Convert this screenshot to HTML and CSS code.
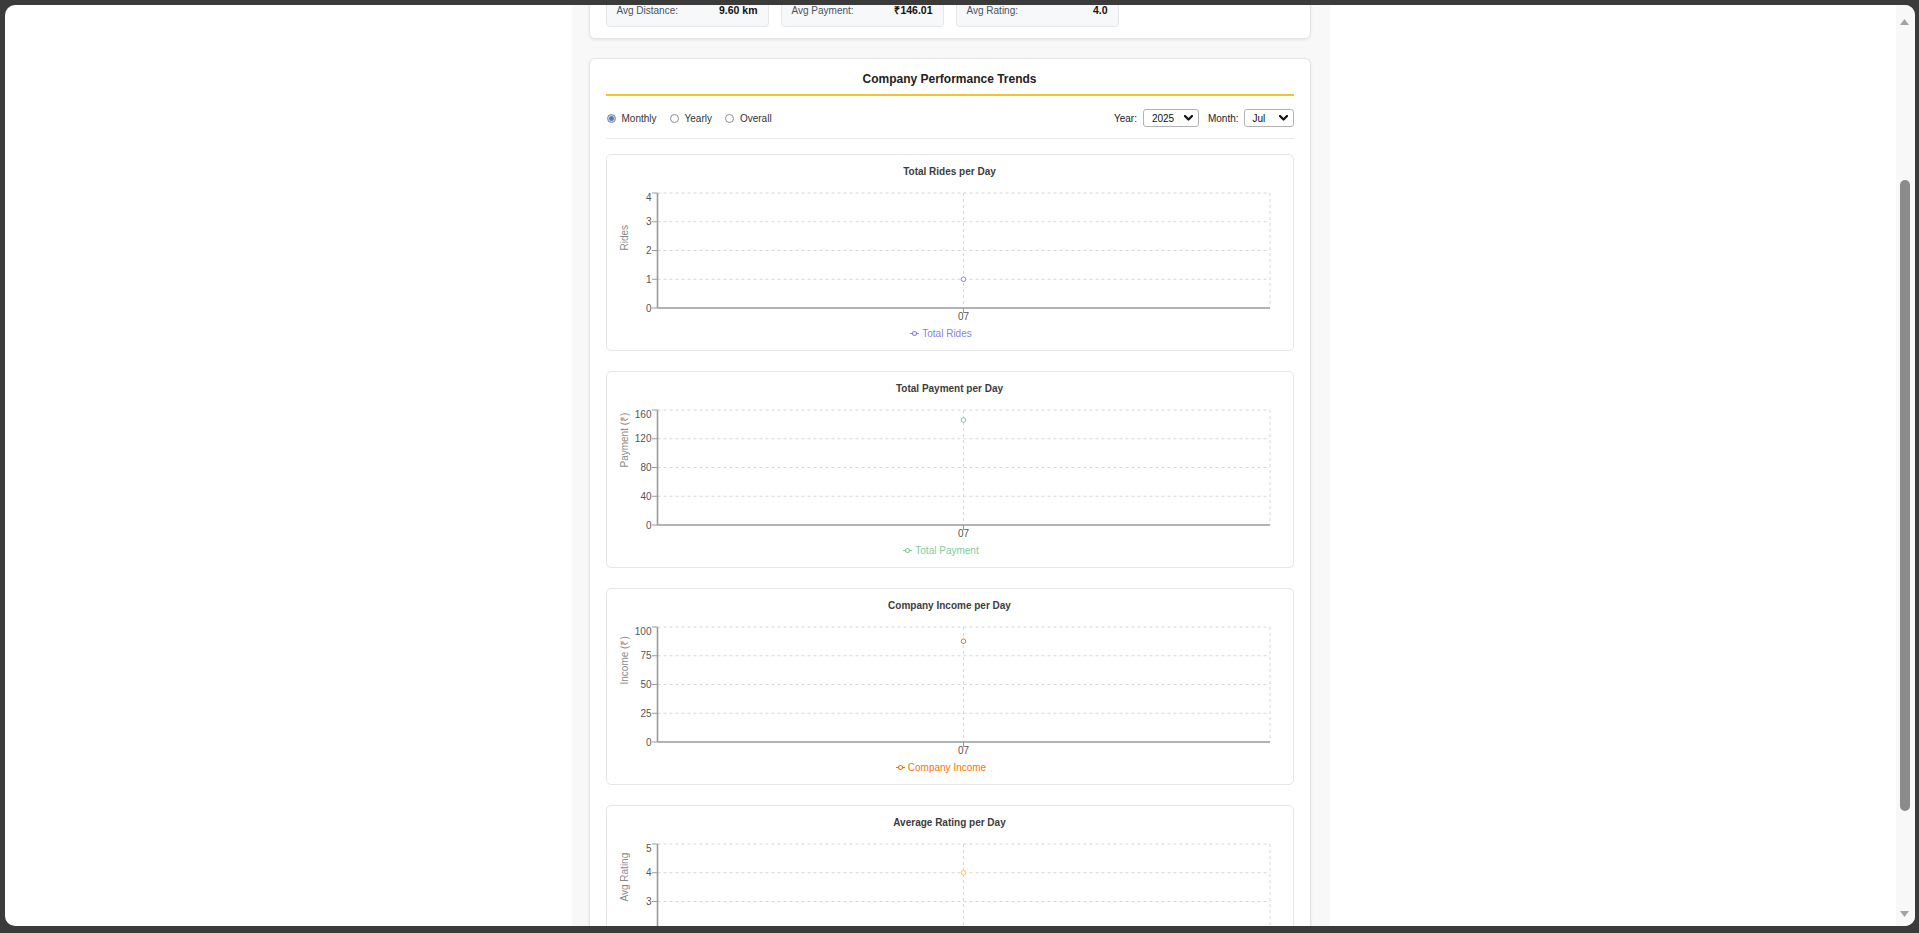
FILE: index.html
```html
<!DOCTYPE html>
<html lang="en">
<head>
<meta charset="utf-8">
<title>Company Performance Trends</title>
<link rel="stylesheet" href="styles.css">
</head>
<body>
<div class="frame">
  <div class="viewport">
    <div class="page">
      <main class="column">
        <section class="card stats-card">
          <div class="stats-grid">
            <div class="stat"><span class="stat-label">Avg Distance:</span><span class="stat-value">9.60 km</span></div>
            <div class="stat"><span class="stat-label">Avg Payment:</span><span class="stat-value">₹146.01</span></div>
            <div class="stat"><span class="stat-label">Avg Rating:</span><span class="stat-value">4.0</span></div>
          </div>
        </section>

        <section class="card trends-card">
          <h2 class="trends-title">Company Performance Trends</h2>
          <div class="controls">
            <div class="radios">
              <label class="radio"><span class="radio-dot checked"></span>Monthly</label>
              <label class="radio"><span class="radio-dot"></span>Yearly</label>
              <label class="radio"><span class="radio-dot"></span>Overall</label>
            </div>
            <div class="filters">
              <span class="filter-label">Year:</span>
              <span class="select select-year">2025<svg class="chev" width="9" height="6" viewBox="0 0 9 6"><polyline points="1,1 4.5,4.5 8,1"/></svg></span>
              <span class="filter-label month-label">Month:</span>
              <span class="select select-month">Jul<svg class="chev" width="9" height="6" viewBox="0 0 9 6"><polyline points="1,1 4.5,4.5 8,1"/></svg></span>
            </div>
          </div>

          <div class="charts">
            <div class="chart-card">
              <div class="chart-title">Total Rides per Day</div>
              <svg class="chart-svg" width="666" height="141" viewBox="0 0 666 141">
                <g class="grid">
                  <line x1="40.5" y1="10" x2="653" y2="10"/>
                  <line x1="40.5" y1="38.75" x2="653" y2="38.75"/>
                  <line x1="40.5" y1="67.5" x2="653" y2="67.5"/>
                  <line x1="40.5" y1="96.25" x2="653" y2="96.25"/>
                  <line x1="346.5" y1="10" x2="346.5" y2="125"/>
                  <line x1="653" y1="10" x2="653" y2="125"/>
                </g>
                <g class="tick-lines">
                  <line x1="35" y1="10" x2="40.5" y2="10"/>
                  <line x1="35" y1="38.75" x2="40.5" y2="38.75"/>
                  <line x1="35" y1="67.5" x2="40.5" y2="67.5"/>
                  <line x1="35" y1="96.25" x2="40.5" y2="96.25"/>
                  <line x1="35" y1="125" x2="40.5" y2="125"/>
                  <line x1="346.5" y1="125" x2="346.5" y2="130"/>
                </g>
                <line class="axis" x1="40.5" y1="10" x2="40.5" y2="125"/>
                <line class="axis" x1="40.5" y1="125" x2="653" y2="125"/>
                <text class="tick" x="34.5" y="17.5" text-anchor="end">4</text>
                <text class="tick" x="34.5" y="42.25" text-anchor="end">3</text>
                <text class="tick" x="34.5" y="71" text-anchor="end">2</text>
                <text class="tick" x="34.5" y="99.75" text-anchor="end">1</text>
                <text class="tick" x="34.5" y="128.5" text-anchor="end">0</text>
                <text class="tick" x="346.5" y="136.5" text-anchor="middle">07</text>
                <text class="ylabel" x="10.5" y="67.5" transform="rotate(-90 10.5 67.5)">Rides</text>
                <circle class="dot" cx="346.5" cy="96.25" r="2.3" stroke="#8884d8"/>
              </svg>
              <div class="legend legend-rides">
                <svg class="legend-icon" width="9" height="9" viewBox="0 0 9 9"><path d="M0,4.5H2.5A2,2 0 1,1 6.5,4.5H9M6.5,4.5A2,2 0 1,1 2.5,4.5"/></svg>
                <span>Total Rides</span>
              </div>
            </div>

            <div class="chart-card">
              <div class="chart-title">Total Payment per Day</div>
              <svg class="chart-svg" width="666" height="141" viewBox="0 0 666 141">
                <g class="grid">
                  <line x1="40.5" y1="10" x2="653" y2="10"/>
                  <line x1="40.5" y1="38.75" x2="653" y2="38.75"/>
                  <line x1="40.5" y1="67.5" x2="653" y2="67.5"/>
                  <line x1="40.5" y1="96.25" x2="653" y2="96.25"/>
                  <line x1="346.5" y1="10" x2="346.5" y2="125"/>
                  <line x1="653" y1="10" x2="653" y2="125"/>
                </g>
                <g class="tick-lines">
                  <line x1="35" y1="10" x2="40.5" y2="10"/>
                  <line x1="35" y1="38.75" x2="40.5" y2="38.75"/>
                  <line x1="35" y1="67.5" x2="40.5" y2="67.5"/>
                  <line x1="35" y1="96.25" x2="40.5" y2="96.25"/>
                  <line x1="35" y1="125" x2="40.5" y2="125"/>
                  <line x1="346.5" y1="125" x2="346.5" y2="130"/>
                </g>
                <line class="axis" x1="40.5" y1="10" x2="40.5" y2="125"/>
                <line class="axis" x1="40.5" y1="125" x2="653" y2="125"/>
                <text class="tick" x="34.5" y="17.5" text-anchor="end">160</text>
                <text class="tick" x="34.5" y="42.25" text-anchor="end">120</text>
                <text class="tick" x="34.5" y="71" text-anchor="end">80</text>
                <text class="tick" x="34.5" y="99.75" text-anchor="end">40</text>
                <text class="tick" x="34.5" y="128.5" text-anchor="end">0</text>
                <text class="tick" x="346.5" y="136.5" text-anchor="middle">07</text>
                <text class="ylabel" x="10.5" y="67.5" transform="rotate(-90 10.5 67.5)">Payment (₹)</text>
                <circle class="dot" cx="346.5" cy="20.05" r="2.3" stroke="#82ca9d"/>
              </svg>
              <div class="legend legend-payment">
                <svg class="legend-icon" width="9" height="9" viewBox="0 0 9 9"><path d="M0,4.5H2.5A2,2 0 1,1 6.5,4.5H9M6.5,4.5A2,2 0 1,1 2.5,4.5"/></svg>
                <span>Total Payment</span>
              </div>
            </div>

            <div class="chart-card">
              <div class="chart-title">Company Income per Day</div>
              <svg class="chart-svg" width="666" height="141" viewBox="0 0 666 141">
                <g class="grid">
                  <line x1="40.5" y1="10" x2="653" y2="10"/>
                  <line x1="40.5" y1="38.75" x2="653" y2="38.75"/>
                  <line x1="40.5" y1="67.5" x2="653" y2="67.5"/>
                  <line x1="40.5" y1="96.25" x2="653" y2="96.25"/>
                  <line x1="346.5" y1="10" x2="346.5" y2="125"/>
                  <line x1="653" y1="10" x2="653" y2="125"/>
                </g>
                <g class="tick-lines">
                  <line x1="35" y1="10" x2="40.5" y2="10"/>
                  <line x1="35" y1="38.75" x2="40.5" y2="38.75"/>
                  <line x1="35" y1="67.5" x2="40.5" y2="67.5"/>
                  <line x1="35" y1="96.25" x2="40.5" y2="96.25"/>
                  <line x1="35" y1="125" x2="40.5" y2="125"/>
                  <line x1="346.5" y1="125" x2="346.5" y2="130"/>
                </g>
                <line class="axis" x1="40.5" y1="10" x2="40.5" y2="125"/>
                <line class="axis" x1="40.5" y1="125" x2="653" y2="125"/>
                <text class="tick" x="34.5" y="17.5" text-anchor="end">100</text>
                <text class="tick" x="34.5" y="42.25" text-anchor="end">75</text>
                <text class="tick" x="34.5" y="71" text-anchor="end">50</text>
                <text class="tick" x="34.5" y="99.75" text-anchor="end">25</text>
                <text class="tick" x="34.5" y="128.5" text-anchor="end">0</text>
                <text class="tick" x="346.5" y="136.5" text-anchor="middle">07</text>
                <text class="ylabel" x="10.5" y="67.5" transform="rotate(-90 10.5 67.5)">Income (₹)</text>
                <circle class="dot" cx="346.5" cy="24.26" r="2.3" stroke="#ff7300"/>
              </svg>
              <div class="legend legend-income">
                <svg class="legend-icon" width="9" height="9" viewBox="0 0 9 9"><path d="M0,4.5H2.5A2,2 0 1,1 6.5,4.5H9M6.5,4.5A2,2 0 1,1 2.5,4.5"/></svg>
                <span>Company Income</span>
              </div>
            </div>

            <div class="chart-card">
              <div class="chart-title">Average Rating per Day</div>
              <svg class="chart-svg" width="666" height="141" viewBox="0 0 666 141">
                <g class="grid">
                  <line x1="40.5" y1="10" x2="653" y2="10"/>
                  <line x1="40.5" y1="38.75" x2="653" y2="38.75"/>
                  <line x1="40.5" y1="67.5" x2="653" y2="67.5"/>
                  <line x1="40.5" y1="96.25" x2="653" y2="96.25"/>
                  <line x1="346.5" y1="10" x2="346.5" y2="125"/>
                  <line x1="653" y1="10" x2="653" y2="125"/>
                </g>
                <g class="tick-lines">
                  <line x1="35" y1="10" x2="40.5" y2="10"/>
                  <line x1="35" y1="38.75" x2="40.5" y2="38.75"/>
                  <line x1="35" y1="67.5" x2="40.5" y2="67.5"/>
                  <line x1="35" y1="96.25" x2="40.5" y2="96.25"/>
                  <line x1="35" y1="125" x2="40.5" y2="125"/>
                  <line x1="346.5" y1="125" x2="346.5" y2="130"/>
                </g>
                <line class="axis" x1="40.5" y1="10" x2="40.5" y2="125"/>
                <line class="axis" x1="40.5" y1="125" x2="653" y2="125"/>
                <text class="tick" x="34.5" y="17.5" text-anchor="end">5</text>
                <text class="tick" x="34.5" y="42.25" text-anchor="end">4</text>
                <text class="tick" x="34.5" y="71" text-anchor="end">3</text>
                <text class="tick" x="34.5" y="99.75" text-anchor="end">2</text>
                <text class="tick" x="34.5" y="128.5" text-anchor="end">1</text>
                <text class="tick" x="346.5" y="136.5" text-anchor="middle">07</text>
                <text class="ylabel" x="10.5" y="67.5" transform="rotate(-90 10.5 67.5)">Avg Rating</text>
                <circle class="dot" cx="346.5" cy="38.75" r="2.3" stroke="#ffc658"/>
              </svg>
              <div class="legend legend-rating">
                <svg class="legend-icon" width="9" height="9" viewBox="0 0 9 9"><path d="M0,4.5H2.5A2,2 0 1,1 6.5,4.5H9M6.5,4.5A2,2 0 1,1 2.5,4.5"/></svg>
                <span>Average Rating</span>
              </div>
            </div>
          </div>
        </section>
      </main>
    </div>
    <div class="scrollbar">
      <div class="scroll-btn scroll-up"><svg width="9" height="6" viewBox="0 0 9 6"><polygon points="0,6 4.5,0 9,6"/></svg></div>
      <div class="scroll-thumb"></div>
      <div class="scroll-space"></div>
      <div class="scroll-btn scroll-down"><svg width="9" height="6" viewBox="0 0 9 6"><polygon points="0,0 9,0 4.5,6"/></svg></div>
    </div>
  </div>
</div>
</body>
</html>
```

FILE: styles.css
```css
* { box-sizing: border-box; }

html, body {
  margin: 0;
  padding: 0;
}

body {
  width: 1919px;
  height: 933px;
  overflow: hidden;
  background: #3b3b3b;
  font-family: "Liberation Sans", Arial, sans-serif;
  color: #333;
}

.frame {
  height: 933px;
  padding: 5px 4px 7px 5px;
}

.viewport {
  height: 921px;
  background: #ffffff;
  border-radius: 10px;
  overflow: hidden;
  display: flex;
}

.page {
  flex: 1;
  display: flex;
  justify-content: center;
  overflow: hidden;
}

.column {
  width: 758px;
  background: #f8f8f8;
  padding: 0 19px 0 17px;
  margin-top: -29px;
}

.card {
  background: #ffffff;
  border: 1px solid #e4e4e4;
  border-radius: 6px;
  box-shadow: 0 1px 3px rgba(0, 0, 0, 0.08);
  padding: 16px;
}

.stats-card {
  padding-bottom: 11px;
}

.stats-grid {
  display: grid;
  grid-template-columns: repeat(4, 1fr);
  gap: 12px;
}

.stat {
  height: 34px;
  display: flex;
  justify-content: space-between;
  align-items: flex-start;
  padding: 11px 10px 10px;
  line-height: 11px;
  background: #f7f8fa;
  border: 1px solid #e3e6ea;
  border-radius: 4px;
}

.stat-label {
  font-size: 10px;
  color: #4a5260;
}

.stat-value {
  font-size: 10.5px;
  font-weight: bold;
  color: #111;
}

.trends-card {
  margin-top: 19px;
  padding: 13px 16px 16px;
}

.trends-title {
  margin: 0;
  font-size: 12px;
  line-height: 14px;
  font-weight: bold;
  text-align: center;
  color: #222;
  padding-bottom: 8px;
  border-bottom: 2px solid #f2c230;
}

.controls {
  display: flex;
  justify-content: space-between;
  align-items: center;
  height: 32px;
  margin-top: 11px;
  padding-bottom: 9px;
  border-bottom: 1px solid #e8e8e8;
}

.radios {
  display: flex;
  align-items: center;
  padding-left: 1px;
}

.radio {
  display: flex;
  align-items: center;
  gap: 6px;
  font-size: 10px;
  color: #333;
  margin-right: 13px;
}

.radio-dot {
  width: 9px;
  height: 9px;
  border-radius: 50%;
  border: 1px solid #8c8c8c;
  background: #fff;
}

.radio-dot.checked {
  border-color: #6f87b0;
  background: radial-gradient(circle, #5b79aa 0, #5b79aa 2px, #c8d3e6 2.6px);
}

.filters {
  display: flex;
  align-items: center;
}

.filter-label {
  font-size: 10px;
  color: #222;
  margin-right: 6px;
}

.month-label {
  margin-left: 9px;
  margin-right: 5px;
}

.select {
  height: 18px;
  display: flex;
  align-items: center;
  justify-content: space-between;
  padding: 0 5px 0 8px;
  border: 1px solid #b3b3b3;
  border-radius: 3px;
  background: #fff;
  font-size: 10px;
  color: #111;
}

.select-year { width: 56px; }
.select-month { width: 50px; }

.chev polyline {
  fill: none;
  stroke: #111;
  stroke-width: 2.2;
  stroke-linecap: round;
  stroke-linejoin: round;
}

.charts {
  margin-top: 15px;
  display: flex;
  flex-direction: column;
  gap: 20px;
}

.chart-card {
  height: 197px;
  border: 1px solid #e6e6e6;
  border-radius: 5px;
  padding: 10px 10px 8px;
  background: #fff;
}

.chart-title {
  font-size: 10px;
  line-height: 14px;
  font-weight: bold;
  text-align: center;
  color: #3c3c3c;
  margin-bottom: 4px;
}

.chart-svg {
  display: block;
  overflow: visible;
}

.grid line {
  stroke: #d6d6d6;
  stroke-width: 1;
  stroke-dasharray: 3 3;
}

.tick-lines line {
  stroke: #9a9a9a;
  stroke-width: 1;
}

.axis {
  stroke: #9a9a9a;
  stroke-width: 1.6;
}

.tick {
  font-family: "Liberation Sans", Arial, sans-serif;
  font-size: 10px;
  fill: #555;
}

.ylabel {
  font-family: "Liberation Sans", Arial, sans-serif;
  font-size: 10px;
  fill: #8a8a8a;
}

.dot {
  fill: #fff;
  stroke-width: 1;
}

.legend {
  height: 18px;
  display: flex;
  justify-content: center;
  align-items: center;
  gap: 3px;
  padding-right: 17px;
  font-size: 10px;
}

.legend-icon path {
  fill: none;
  stroke-width: 1.2;
}

.legend-rides { color: #8884d8; }
.legend-rides path { stroke: #8884d8; }
.legend-payment { color: #82ca9d; }
.legend-payment path { stroke: #82ca9d; }
.legend-income { color: #ff7300; }
.legend-income path { stroke: #ff7300; }
.legend-rating { color: #ffc658; }
.legend-rating path { stroke: #ffc658; }

.scrollbar {
  width: 19px;
  background: #f8f8f8;
  display: flex;
  flex-direction: column;
}

.scroll-btn {
  height: 17px;
  display: flex;
  align-items: center;
  justify-content: center;
  padding-right: 3px;
}

.scroll-btn polygon {
  fill: #a3a3a3;
}

.scroll-up {
  margin-top: 8px;
}

.scroll-down {
  margin-bottom: 4px;
}

.scroll-thumb {
  width: 10px;
  height: 631px;
  margin-top: 150px;
  margin-left: 4px;
  border-radius: 5px;
  background: #8b8b8b;
}

.scroll-space {
  flex: 1;
}
```
